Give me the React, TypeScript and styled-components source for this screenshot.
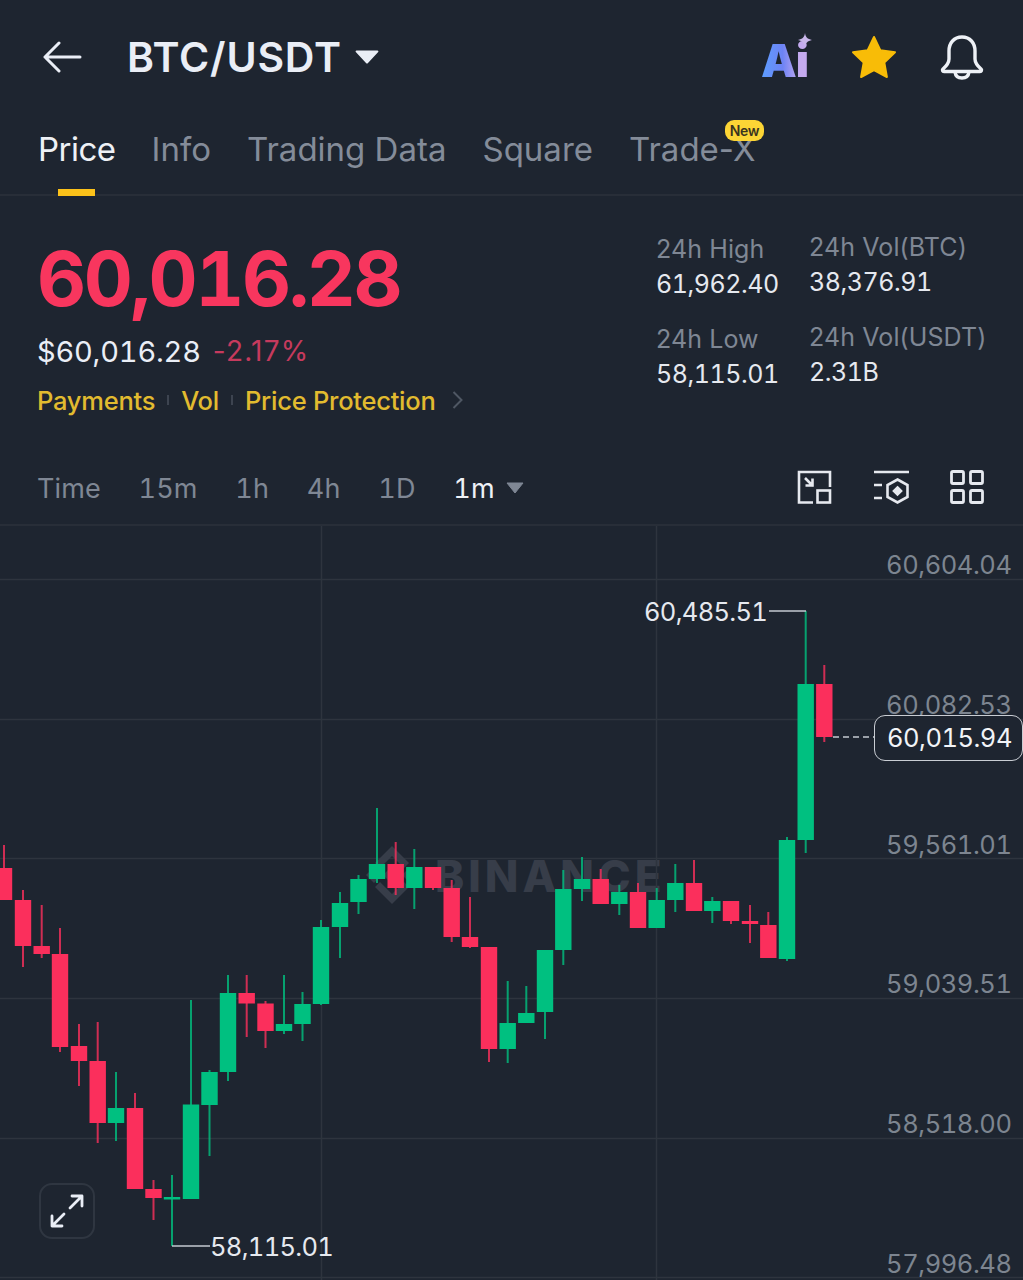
import React from "react";
import styled, { createGlobalStyle, css } from "styled-components";

const BG = "#1e2530";
const GREEN = "#00c080";
const RED = "#fb2f5c";
const FONT = `Inter, "Noto Sans", sans-serif`;
const tnum = css`
  font-variant-numeric: tabular-nums;
`;

const Global = createGlobalStyle`
  html, body { margin: 0; padding: 0; background: ${BG}; }
  #root { width: 1023px; height: 1280px; overflow: hidden; }
`;

const Page = styled.div`
  width: 1023px;
  height: 1280px;
  background: ${BG};
  font-family: ${FONT};
  color: #eaecef;
  display: flex;
  flex-direction: column;
  overflow: hidden;
`;

const Header = styled.header`
  height: 113px;
  flex: none;
  display: flex;
  align-items: center;
  padding: 0 38px 0 42px;
  box-sizing: border-box;
`;
const Title = styled.h1`
  margin: 0 0 0 45px;
  font-size: 41px;
  font-weight: 600;
  letter-spacing: 0.8px;
  color: #eaeef6;
`;
const TitleCaret = styled.svg`
  margin-left: 13px;
  width: 24px;
  height: 16px;
`;
const HeaderIcons = styled.div`
  margin-left: auto;
  display: flex;
  align-items: center;
`;
const AiLogo = styled.div`
  position: relative;
  width: 48px;
  height: 46px;
  margin-right: 42px;
  font-size: 45px;
  line-height: 54px;
  font-weight: 900;
  letter-spacing: -1px;
  background: linear-gradient(90deg, #5c9eff 0%, #6d83f5 45%, #c5abef 80%);
  -webkit-background-clip: text;
  background-clip: text;
  color: transparent;
`;
const Sparkle = styled.svg`
  position: absolute;
  top: -1px;
  right: -3px;
  width: 14px;
  height: 14px;
`;

const Tabs = styled.nav`
  height: 83px;
  flex: none;
  box-sizing: border-box;
  display: flex;
  gap: 36px;
  padding: 16px 0 0 38px;
  border-bottom: 2px solid #282e38;
`;
const Tab = styled.div<{ $active?: boolean }>`
  position: relative;
  height: 65px;
  font-size: 33px;
  line-height: 40px;
  font-weight: 400;
  letter-spacing: ${(p) => (p.$active ? "-0.5px" : "0")};
  color: ${(p) => (p.$active ? "#eef1f6" : "#848c99")};
`;
const TabBar = styled.span`
  position: absolute;
  left: 20px;
  bottom: -2px;
  width: 37px;
  height: 7px;
  background: #fcc21a;
`;
const NewBadge = styled.span`
  position: absolute;
  left: 96px;
  top: -9px;
  height: 21px;
  width: 39px;
  border-radius: 9px;
  background: #fcd535;
  color: #3a3420;
  font-size: 14px;
  line-height: 21px;
  font-weight: 600;
  text-align: center;
  letter-spacing: -0.3px;
`;

const Summary = styled.section`
  height: 246px;
  flex: none;
  display: flex;
  justify-content: space-between;
  box-sizing: border-box;
  padding: 0 38px 0 37px;
`;
const PriceCol = styled.div`
  display: flex;
  flex-direction: column;
`;
const BigPrice = styled.div`
  ${tnum}
  margin-top: 32px;
  height: 100px;
  font-size: 76px;
  line-height: 100px;
  font-weight: 700;
  letter-spacing: -2.4px;
  color: #f8365e;
`;
const SubRow = styled.div`
  margin-top: 3px;
  display: flex;
  align-items: center;
  gap: 12px;
  height: 40px;
  font-size: 29px;
  letter-spacing: -0.2px;
`;
const Fiat = styled.span`
  ${tnum}
  color: #eaeef6;
`;
const Change = styled.span`
  color: #c63a5d;
  font-size: 28px;
  letter-spacing: 1.2px;
`;
const LinkRow = styled.div`
  margin-top: 11px;
  display: flex;
  align-items: center;
  height: 36px;
  font-size: 25.5px;
  font-weight: 500;
  letter-spacing: -0.25px;
  color: #e2bb2f;
`;
const LinkSep = styled.span`
  width: 2px;
  height: 10px;
  margin: 0 12px;
  background: #3d4450;
`;
const Chevron = styled.svg`
  margin-left: 16px;
  width: 11px;
  height: 20px;
`;
const StatsGrid = styled.div`
  display: grid;
  grid-template-columns: 153px 176px;
  grid-auto-rows: 90px;
  padding-top: 36px;
`;
const Stat = styled.div<{ $up?: boolean }>`
  display: flex;
  flex-direction: column;
  margin-top: ${(p) => (p.$up ? "-2px" : "0")};
`;
const StatLabel = styled.span`
  height: 35px;
  line-height: 35px;
  font-size: 25px;
  letter-spacing: 0.1px;
  color: #7f8794;
  white-space: nowrap;
`;
const StatValue = styled.span`
  ${tnum}
  height: 35px;
  line-height: 35px;
  font-size: 25px;
  letter-spacing: -0.45px;
  color: #e6e9ef;
`;

const Toolbar = styled.div`
  height: 84px;
  flex: none;
  box-sizing: border-box;
  display: flex;
  align-items: center;
  padding: 10px 39px 0 37px;
  border-bottom: 2px solid #282e38;
`;
const Interval = styled.span<{ $active?: boolean }>`
  ${tnum}
  font-size: 27px;
  letter-spacing: 0.1px;
  margin-right: 37.8px;
  color: ${(p) => (p.$active ? "#eef1f6" : "#7f8794")};
  &:last-of-type { margin-right: 11px; }
`;
const ToolIcons = styled.div`
  margin-left: auto;
  margin-bottom: 2px;
  display: flex;
  gap: 40.5px;
  align-items: center;
`;

const Chart = styled.div`
  position: relative;
  flex: 1;
`;
const ChartSvg = styled.svg`
  position: absolute;
  inset: 0;
  width: 1023px;
  height: 754px;
`;
const Watermark = styled.div`
  position: absolute;
  left: 435px;
  top: 325px;
  font-size: 44px;
  line-height: 50px;
  font-weight: 800;
  letter-spacing: 4px;
  color: #373d49;
`;
const Axis = styled.div`
  position: absolute;
  right: 11.5px;
  top: 22px;
  height: 733px;
  display: flex;
  flex-direction: column;
  justify-content: space-between;
  align-items: flex-end;
`;
const AxisLabel = styled.span`
  ${tnum}
  font-size: 25.5px;
  line-height: 34px;
  letter-spacing: -0.45px;
  color: #7d8590;
`;
const ExtremeLabel = styled.span<{ $left: number; $top: number }>`
  ${tnum}
  position: absolute;
  left: ${(p) => p.$left}px;
  top: ${(p) => p.$top}px;
  font-size: 25.5px;
  line-height: 34px;
  letter-spacing: -0.7px;
  color: #e6e9ef;
`;
const LastPrice = styled.div`
  ${tnum}
  position: absolute;
  left: 874px;
  top: 189px;
  width: 149px;
  height: 46px;
  box-sizing: border-box;
  border: 1.5px solid #c9cdd3;
  border-radius: 11px;
  background: ${BG};
  color: #f2f4f7;
  font-size: 25.5px;
  line-height: 43px;
  letter-spacing: -0.5px;
  padding-left: 12px;
`;
const ExpandButton = styled.div`
  position: absolute;
  left: 39px;
  top: 657px;
  width: 56px;
  height: 56px;
  box-sizing: border-box;
  border: 2px solid #2f3641;
  border-radius: 13px;
  display: flex;
  align-items: center;
  justify-content: center;
`;

type C = [number, number, number, number, number];
// center x, wick top, body top, body bottom, wick bottom
const up: C[] = [
  [116, 1072, 1108, 1123, 1141],
  [172, 1175, 1197, 1199.5, 1246],
  [191, 1000, 1104.5, 1199, 1199],
  [209.5, 1070, 1072, 1105, 1156],
  [228, 975, 993, 1072, 1081],
  [284, 975, 1024, 1031, 1034],
  [302.5, 992, 1004, 1024, 1041],
  [321, 920, 927, 1004, 1005],
  [340, 892, 903, 927, 958],
  [358.5, 875, 879, 902, 914],
  [377, 808, 864, 879, 883],
  [414.3, 849, 867, 888, 909],
  [507.7, 981, 1023, 1049, 1063],
  [526.3, 986, 1013, 1023, 1023],
  [545, 950, 950, 1012, 1039],
  [563.3, 870, 889, 950, 965],
  [582, 857, 879, 889, 901],
  [619.3, 885, 892, 904, 915],
  [656.7, 888, 900, 928, 928],
  [675.3, 864, 883, 900, 912],
  [712.3, 897, 901, 911, 923],
  [787, 837, 840, 959, 961],
  [805.7, 611, 684, 840, 853],
];
const down: C[] = [
  [4, 845, 868, 900, 900],
  [23, 890, 900, 946, 967],
  [41.7, 905, 946, 954, 958],
  [60, 928, 954, 1047, 1052],
  [79, 1024, 1046, 1061, 1086],
  [97.7, 1022, 1061, 1123, 1143],
  [135, 1093, 1108, 1189, 1189],
  [153.5, 1180, 1189, 1198, 1220],
  [246.7, 975, 993, 1003.5, 1037],
  [265.5, 1001, 1003.5, 1031, 1048],
  [395.7, 842, 864, 888, 895],
  [433, 867, 867, 888, 890],
  [451.7, 880, 888, 937, 942],
  [470, 897, 937, 947, 948],
  [489, 947, 947, 1049, 1062],
  [600.7, 869, 879, 904, 904],
  [638, 883, 892, 928, 928],
  [694, 860, 883, 911, 911],
  [731, 901, 901, 921, 924],
  [750, 905, 921, 924, 943],
  [768.3, 912, 925, 958, 958],
  [824.3, 665, 684, 737, 742],
];

const Candles = ({ data, color }: { data: C[]; color: string }) => (
  <g fill={color}>
    {data.map(([x, wt, bt, bb, wb]) => (
      <g key={x}>
        <rect x={x - 1} y={wt} width={2} height={wb - wt} opacity={0.8} />
        <rect x={x - 8.2} y={bt} width={16.4} height={bb - bt} />
      </g>
    ))}
  </g>
);

const axis = ["60,604.04", "60,082.53", "59,561.01", "59,039.51", "58,518.00", "57,996.48"];

export default function App() {
  return (
    <Page>
      <Global />
      <Header>
        <svg width="40" height="32" viewBox="0 0 40 32" fill="none" stroke="#eaeef6" strokeWidth="3" strokeLinecap="round" strokeLinejoin="round">
          <path d="M17 2 3 16l14 14M3 16h35" />
        </svg>
        <Title>BTC/USDT</Title>
        <TitleCaret viewBox="0 0 24 16">
          <path d="M1.5 1.5h21a1 1 0 0 1 .7 1.6L13 14a1.4 1.4 0 0 1-2 0L.8 3.1a1 1 0 0 1 .7-1.6z" fill="#eaeef6" />
        </TitleCaret>
        <HeaderIcons>
          <AiLogo>
            Ai
            <Sparkle viewBox="0 0 14 14">
              <path d="M7 0c.6 4 2.4 6 7 7-4.600 1-6.400 3-7 7-.6-4-2.400-6-7-7 4.600-1 6.400-3 7-7z" fill="#c9b6ea" />
            </Sparkle>
          </AiLogo>
          <svg width="46" height="44" viewBox="0 0 46 44" style={{ marginRight: 42 }}>
            <path d="M23 2l6.300 13.300 14.700 2-10.700 10.200 2.600 14.500L23 35l-12.900 7 2.600-14.500L2 17.300l14.700-2z" fill="#f8bc07" stroke="#f8bc07" strokeLinejoin="round" strokeWidth="2" />
          </svg>
          <svg width="46" height="46" viewBox="0 0 46 46" fill="none" stroke="#eef1f6" strokeWidth="3.400" strokeLinejoin="round" strokeLinecap="round">
            <path d="M23 3c-8 0-13 6-13 14v8c0 4-2 6.500-6 10-1 1-.5 2.500 1 2.500h36c1.500 0 2-1.500 1-2.500-4-3.500-6-6-6-10v-8c0-8-5-14-13-14z" />
            <path d="M16 38c.5 4 3.500 6 7 6s6.500-2 7-6" />
          </svg>
        </HeaderIcons>
      </Header>

      <Tabs>
        <Tab $active>Price<TabBar /></Tab>
        <Tab>Info</Tab>
        <Tab>Trading Data</Tab>
        <Tab>Square</Tab>
        <Tab>Trade-X<NewBadge>New</NewBadge></Tab>
      </Tabs>

      <Summary>
        <PriceCol>
          <BigPrice>60,016.28</BigPrice>
          <SubRow>
            <Fiat>$60,016.28</Fiat>
            <Change>-2.17%</Change>
          </SubRow>
          <LinkRow>
            Payments<LinkSep />Vol<LinkSep />Price Protection
            <Chevron viewBox="0 0 11 20" fill="none" stroke="#4f5763" strokeWidth="2">
              <path d="M1.500 2l8 8-8 8" />
            </Chevron>
          </LinkRow>
        </PriceCol>
        <StatsGrid>
          <Stat><StatLabel>24h High</StatLabel><StatValue>61,962.40</StatValue></Stat>
          <Stat $up><StatLabel>24h Vol(BTC)</StatLabel><StatValue>38,376.91</StatValue></Stat>
          <Stat><StatLabel>24h Low</StatLabel><StatValue>58,115.01</StatValue></Stat>
          <Stat $up><StatLabel>24h Vol(USDT)</StatLabel><StatValue>2.31B</StatValue></Stat>
        </StatsGrid>
      </Summary>

      <Toolbar>
        <Interval>Time</Interval>
        <Interval>15m</Interval>
        <Interval>1h</Interval>
        <Interval>4h</Interval>
        <Interval>1D</Interval>
        <Interval $active>1m</Interval>
        <svg width="18" height="12" viewBox="0 0 18 12"><path d="M1 1h16L9 11z" fill="#7f8794" stroke="#7f8794" strokeLinejoin="round" /></svg>
        <ToolIcons>
          <svg width="35" height="34" viewBox="0 0 35 34" fill="none" stroke="#e6e9ef" strokeWidth="2.600">
            <path d="M16 32.500H2V2h31v15" />
            <rect x="20.500" y="20.500" width="12.500" height="12" />
            <path d="M8 8l8 8M8.500 15.500H15.500V8.500" />
          </svg>
          <svg width="37" height="34" viewBox="0 0 37 34" fill="none" stroke="#e6e9ef" strokeWidth="2.600">
            <path d="M1 2h35M1 15h8M1 28h8" />
            <path d="M24.500 9.500l10 5.500v12l-10 5.500-10-5.500V15z" />
            <path d="M24.500 17.500l3.500 3.500-3.500 3.500-3.500-3.500z" fill="#e6e9ef" />
          </svg>
          <svg width="34" height="34" viewBox="0 0 34 34" fill="none" stroke="#e6e9ef" strokeWidth="2.800">
            <rect x="1.500" y="1.500" width="12" height="12" rx="1.500" />
            <rect x="20.500" y="1.500" width="12" height="12" rx="1.500" />
            <rect x="1.500" y="20.500" width="12" height="12" rx="1.500" />
            <rect x="20.500" y="20.500" width="12" height="12" rx="1.500" />
          </svg>
        </ToolIcons>
      </Toolbar>

      <Chart>
        <Watermark>BINANCE</Watermark>
        <ChartSvg viewBox="0 526 1023 754">
          <g stroke="#2e343e" strokeWidth="1.500">
            {[579.5, 719.5, 858.5, 998.5, 1138.5, 1277.5].map((y) => (
              <line key={y} x1="0" x2="1023" y1={y} y2={y} />
            ))}
            <line x1="321.500" x2="321.500" y1="526" y2="1280" />
            <line x1="656.500" x2="656.500" y1="526" y2="1280" />
          </g>
          <path d="M392 846l17 17-5 5-12-12-12 12-5-5zM392 904l-17-17 5-5 12 12 12-12 5 5zM366 875l8-8 8 8-8 8zM418 875l-8-8-8 8 8 8zM392 866l9 9-9 9-9-9z" fill="#373d49" />
          <Candles data={up} color={GREEN} />
          <Candles data={down} color={RED} />
          <path d="M769 611h37" stroke="#c5cad1" strokeWidth="1.500" fill="none" />
          <path d="M172 1246h38" stroke="#c5cad1" strokeWidth="1.500" fill="none" />
          <path d="M833 737h42" stroke="#c5cad1" strokeWidth="1.500" strokeDasharray="6 4" fill="none" />
        </ChartSvg>
        <Axis>
          {axis.map((a) => <AxisLabel key={a}>{a}</AxisLabel>)}
        </Axis>
        <ExtremeLabel $left={644} $top={69}>60,485.51</ExtremeLabel>
        <ExtremeLabel $left={210} $top={704}>58,115.01</ExtremeLabel>
        <LastPrice>60,015.94</LastPrice>
        <ExpandButton>
          <svg width="36" height="36" viewBox="0 0 36 36" fill="none" stroke="#eaeef6" strokeWidth="2.800" strokeLinecap="round" strokeLinejoin="round">
            <path d="M21 15 33 3M23 3h10v10M15 21 3 33M3 23v10h10" />
          </svg>
        </ExpandButton>
      </Chart>
    </Page>
  );
}
